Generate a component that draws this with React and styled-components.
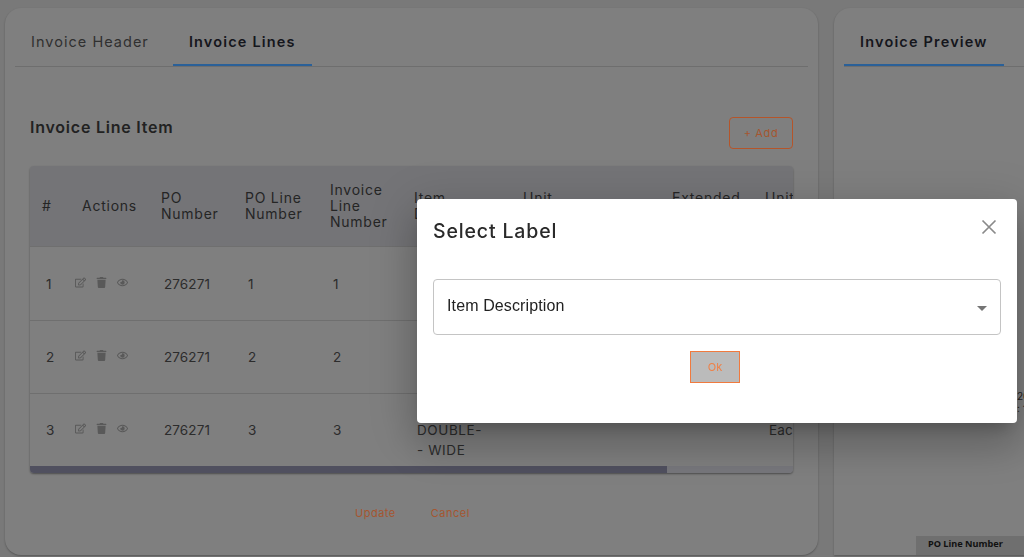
import React from "react";
import styled, { createGlobalStyle } from "styled-components";
import { FaRegEdit, FaTrash, FaRegEye } from "react-icons/fa";

const wide = `"Inter", "Open Sans", sans-serif`;
const Global = createGlobalStyle`
  html, body { margin: 0; height: 100%; overflow: hidden; background: #797979; font-family: ${wide}; }
  #root { height: 100%; }
  * { box-sizing: border-box; }
`;

const Page = styled.div`
  display: flex; gap: 16px; width: 1024px; height: 557px; padding: 8px 0 2px 5px;
  overflow: hidden;
`;
const Card = styled.section`
  flex: ${p => (p.$grow ? "0 0 300px" : "0 0 813px")};
  display: flex; flex-direction: column;
  background: #7f7f7f; border-radius: ${p => (p.$grow ? "16px 0 0 0" : "16px")};
  padding: 0 10px; box-shadow: 0 1px 2px rgba(0,0,0,.28); overflow: hidden;
`;
const Tabs = styled.div`
  display: flex; gap: 8px; height: 59px; flex: none; border-bottom: 1px solid #6e6e6e;
`;
const Tab = styled.div`
  display: flex; align-items: center; justify-content: center; height: 58px; padding: 10px 16px 0;
  font-size: 14.5px; letter-spacing: ${p => (p.$active ? "1.17px" : "1.03px")}; font-weight: ${p => (p.$active ? 600 : 400)};
  color: ${p => (p.$active ? "#15161c" : "#303030")};
  border-bottom: 2px solid ${p => (p.$active ? "#2a6098" : "transparent")};
`;
const Body = styled.div`
  display: flex; flex-direction: column; padding: 0 15px; flex: 1;
`;
const TitleRow = styled.div`
  display: flex; justify-content: space-between; align-items: flex-start; padding-top: 50px; height: 99px; flex: none;
`;
const Title = styled.h2`
  margin: -1px 0 0; font-size: 16px; font-weight: 600; letter-spacing: .77px; color: #222; line-height: 22px;
`;
const AddButton = styled.button`
  width: 64px; height: 32px; background: transparent; border: 1px solid #b4552a; border-radius: 4px;
  color: #a5562f; font: 400 11px ${wide}; letter-spacing: .6px; padding: 0;
`;
const TableWrap = styled.div`
  width: 763px; height: 307px; border-radius: 4px; overflow: hidden; flex: none;
  display: flex; flex-direction: column; box-shadow: 0 1px 2px rgba(0,0,0,.4);
`;
const Row = styled.div`
  display: grid; grid-template-columns: 40px 79px 84px 85px 84px 109px 149px 93px 100px;
  width: 823px; flex: none; align-items: center;
  height: ${p => p.$h}px;
  background: ${p => (p.$head ? "#747477" : "transparent")};
  border-bottom: ${p => (p.$last ? "0" : "1px solid #6f6f6f")};
  font-size: ${p => (p.$head ? "14px" : "13.5px")};
  font-weight: 400; letter-spacing: ${p => (p.$head ? ".75px" : ".1px")}; line-height: ${p => (p.$head ? "16px" : "20px")};
  color: ${p => (p.$head ? "#252525" : "#2c2c2c")};
`;
const HeadCell = styled.div`padding-left: 12px; white-space: pre-line;`;
const DataCell = styled.div`
  padding-left: ${p => p.$pad ?? 16}px; white-space: pre-line;
  padding-top: ${p => p.$top ?? 0}px; letter-spacing: ${p => (p.$item ? ".6px" : "inherit")};
`;
const ActionIcons = styled.div`
  display: flex; gap: 10px; align-items: center; padding: 0 0 3px 5px; color: #595959; font-size: 11px;
`;
const Track = styled.div`height: 7px; flex: none; background: #77777c; display: flex;`;
const Thumb = styled.div`width: 637px; background: #50505f;`;
const Footer = styled.div`
  display: flex; gap: 35px; padding: 33px 0 0 325px;
`;
const LinkButton = styled.button`
  background: none; border: 0; padding: 0; color: #a5562f; font: 400 11px ${wide}; letter-spacing: .5px;
`;
const PreviewBody = styled.div`
  flex: 1; display: flex; flex-direction: column; font-size: 10px; line-height: 13px; color: #222;
`;
const PreviewFragments = styled.div`padding: 323px 0 0 173px; height: 469px; white-space: pre-line;`;
const PreviewHead = styled.div`
  margin-left: 72px; height: 24px; padding: 1px 0 0 12px; background: #6f6f6f;
  font: 700 9.2px "Noto Sans", sans-serif; line-height: 14px; color: #111; white-space: nowrap; width: 200px;
`;
const Overlay = styled.div`position: fixed; inset: 0;`;
const Modal = styled.div`
  position: absolute; left: 417px; top: 199px; width: 600px; height: 224px; background: #fff; border-radius: 4px;
  padding: 16px; display: flex; flex-direction: column;
  box-shadow: 0 11px 15px -7px rgba(0,0,0,.2), 0 24px 38px 3px rgba(0,0,0,.14), 0 9px 46px 8px rgba(0,0,0,.12);
`;
const ModalHead = styled.div`display: flex; justify-content: space-between; align-items: flex-start; height: 64px; flex: none;`;
const ModalTitle = styled.h3`
  margin: 0; font-size: 19.5px; font-weight: 500; letter-spacing: .85px; color: #2a2a2a; line-height: 32px;
`;
const Close = styled.button`
  background: none; border: 0; padding: 0; margin: 4px 4px 0 0; width: 16px; height: 16px; color: #8a8a8a; display: flex;
`;
const SelectBox = styled.div`
  height: 56px; flex: none; border: 1px solid #c4c4c4; border-radius: 4px; display: flex; align-items: center;
  justify-content: space-between; padding: 0 13px 3px 13px;
  font: 400 16px "Liberation Sans", Arial, sans-serif; letter-spacing: .12px; color: #222;
`;
const Caret = styled.span`
  width: 0; height: 0; border-left: 5px solid transparent; border-right: 5px solid transparent;
  border-top: 5px solid #757575; margin-top: 5px;
`;
const Actions = styled.div`display: flex; justify-content: center; padding: 16px 4px 0 0;`;
const OkButton = styled.button`
  width: 50px; height: 32px; padding: 0; background: #bbb; border: 1px solid #f07a3e; border-radius: 0;
  color: #ee8148; font: 400 11px ${wide};
`;

const rows = [
  { n: "1", h: 74 },
  { n: "2", h: 73 },
  { n: "3", h: 72, item: "DOUBLE-\n- WIDE", unit: "Eac", last: true },
];

export default function App() {
  return (
    <>
      <Global />
      <Page>
        <Card>
          <Tabs>
            <Tab>Invoice Header</Tab>
            <Tab $active>Invoice Lines</Tab>
          </Tabs>
          <Body>
            <TitleRow>
              <Title>Invoice Line Item</Title>
              <AddButton>+ Add</AddButton>
            </TitleRow>
            <TableWrap>
              <Row $head $h={81}>
                <HeadCell>#</HeadCell>
                <HeadCell>Actions</HeadCell>
                <HeadCell>{"PO\nNumber"}</HeadCell>
                <HeadCell>{"PO Line\nNumber"}</HeadCell>
                <HeadCell>{"Invoice\nLine\nNumber"}</HeadCell>
                <HeadCell>{"Item\nDescription"}</HeadCell>
                <HeadCell>{"Unit\nPrice"}</HeadCell>
                <HeadCell>{"Extended\nPrice"}</HeadCell>
                <HeadCell>{"Unit\nMeasure"}</HeadCell>
              </Row>
              {rows.map(r => (
                <Row key={r.n} $last={r.last} $h={r.h}>
                  <DataCell>{r.n}</DataCell>
                  <ActionIcons>
                    <FaRegEdit />
                    <FaTrash />
                    <FaRegEye />
                  </ActionIcons>
                  <DataCell $pad={15}>276271</DataCell>
                  <DataCell $pad={15}>{r.n}</DataCell>
                  <DataCell $pad={15}>{r.n}</DataCell>
                  <DataCell $pad={15} $item $top={r.item ? 20 : 0}>{r.item}</DataCell>
                  <DataCell />
                  <DataCell />
                  <DataCell>{r.unit}</DataCell>
                </Row>
              ))}
              <Track><Thumb /></Track>
            </TableWrap>
            <Footer>
              <LinkButton>Update</LinkButton>
              <LinkButton>Cancel</LinkButton>
            </Footer>
          </Body>
        </Card>
        <Card $grow>
          <Tabs>
            <Tab $active>Invoice Preview</Tab>
          </Tabs>
          <PreviewBody>
            <PreviewFragments>{"20\n: 1"}</PreviewFragments>
            <PreviewHead>PO Line Number</PreviewHead>
          </PreviewBody>
        </Card>
      </Page>
      <Overlay>
        <Modal>
          <ModalHead>
            <ModalTitle>Select Label</ModalTitle>
            <Close>
              <svg viewBox="0 0 16 16" width="16" height="16" fill="none" stroke="currentColor" strokeWidth="1.7">
                <path d="M1.5 1.5 14.5 14.5M14.5 1.5 1.5 14.5" />
              </svg>
            </Close>
          </ModalHead>
          <SelectBox>
            Item Description
            <Caret />
          </SelectBox>
          <Actions>
            <OkButton>Ok</OkButton>
          </Actions>
        </Modal>
      </Overlay>
    </>
  );
}
